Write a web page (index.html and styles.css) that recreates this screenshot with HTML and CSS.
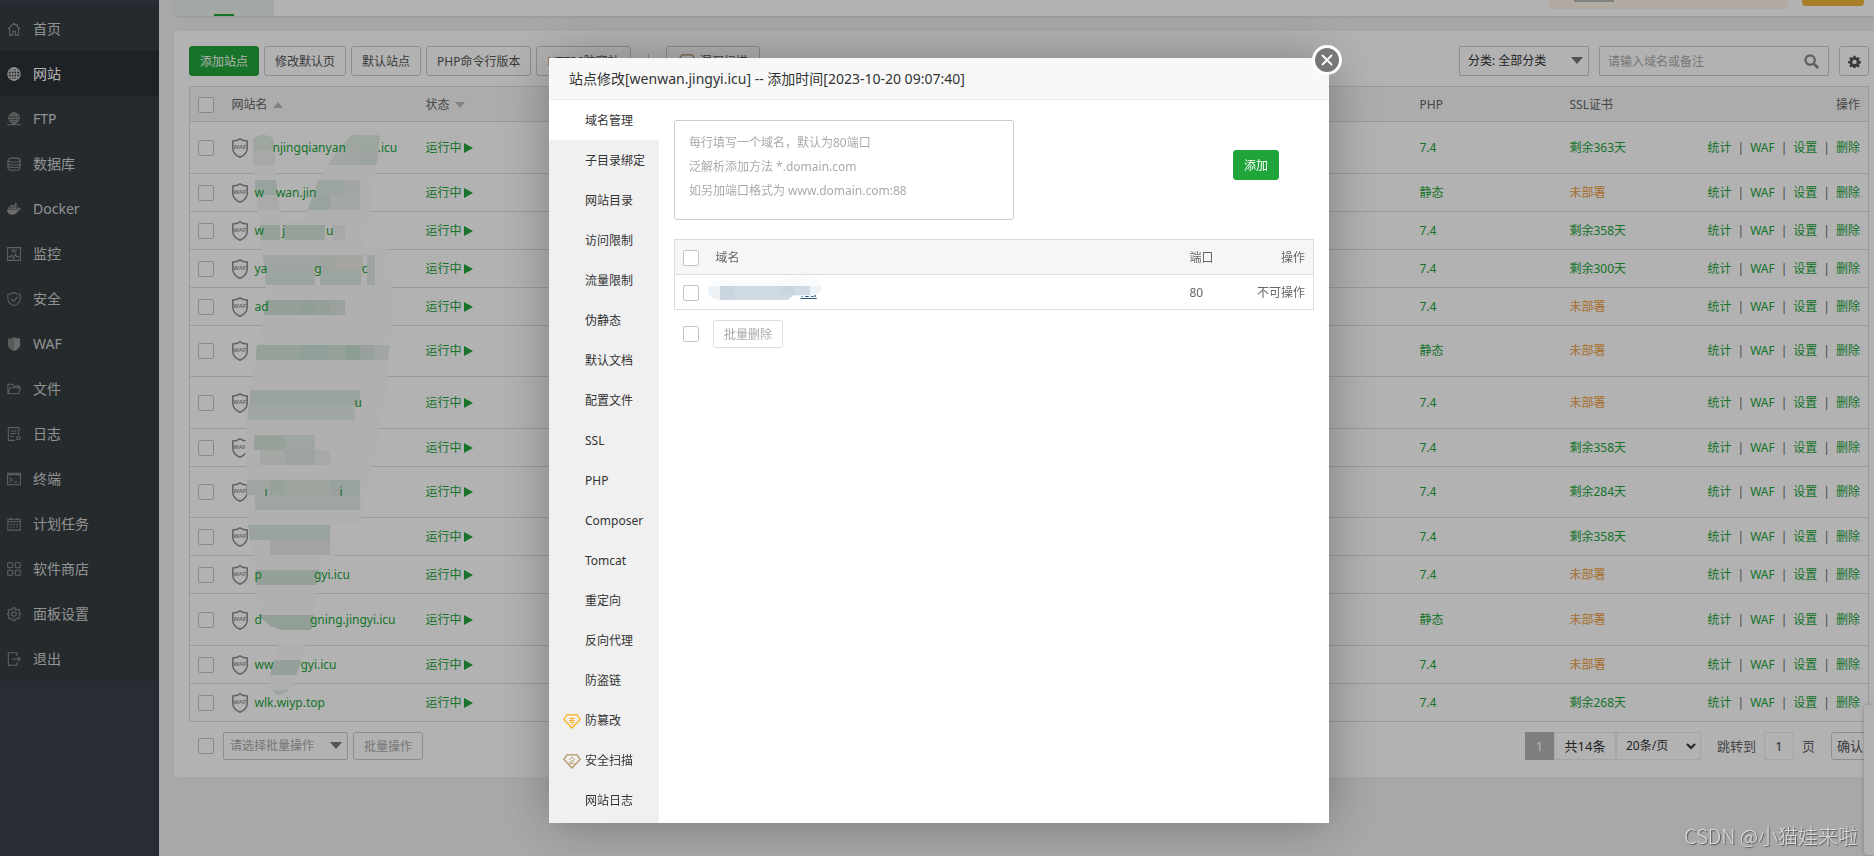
FILE: index.html
```html
<!DOCTYPE html>
<html lang="zh-CN">
<head>
<meta charset="utf-8">
<title>网站</title>
<link rel="stylesheet" href="styles.css">
</head>
<body>
<svg class="defs" aria-hidden="true">
  <symbol id="gem" viewBox="0 0 18 15">
    <path d="M4 .8h10l3.200 4.700L9 14 .8 5.500z" fill="none" stroke="currentColor" stroke-width="1.300"/>
  </symbol>
  <symbol id="caret" viewBox="0 0 12 7"><path d="M0 0h12L6 7z" fill="currentColor"/></symbol>
</svg>

<div class="app">
  <nav class="sidebar">
    <a class="side-item" href="#"><svg viewBox="0 0 16 16"><path d="M1 8l7-6.500L15 8M3 7v8h3.500v-4.500h3V15H13V7M12 2v3"/></svg>首页</a>
    <a class="side-item active" href="#"><svg viewBox="0 0 16 16"><circle cx="8" cy="8" r="7"/><ellipse cx="8" cy="8" rx="3.300" ry="7"/><path d="M8 1v14M1 8h14M2 4.500h12M2 11.500h12"/></svg>网站</a>
    <a class="side-item" href="#"><svg viewBox="0 0 16 16"><circle cx="8" cy="7" r="6"/><ellipse cx="8" cy="7" rx="2.800" ry="6"/><path d="M8 1v13M2 7h12M3 4h10M3 10h10M0 14.500h16M6 14h4"/></svg>FTP</a>
    <a class="side-item" href="#"><svg viewBox="0 0 16 16"><ellipse cx="8" cy="3.500" rx="7" ry="2.500"/><path d="M1 3.500v9C1 14 4 15.200 8 15.200s7-1.200 7-2.700v-9M1 6.500C1 8 4 9.200 8 9.200s7-1.200 7-2.700M1 9.500c0 1.500 3 2.700 7 2.700s7-1.200 7-2.700"/></svg>数据库</a>
    <a class="side-item" href="#"><svg class="solid" viewBox="0 0 16 16"><path d="M0 8.500h11.500c.8-.2.500-2 1-3 1 .6 1.200 1.200 1.300 2 .9-.2 1.600 0 2.200.4-.5.900-1.400 1.200-2.600 1.200C12 12.800 9.500 14.500 6 14.500c-4 0-6-2.300-6-6zM1.500 6h2v2h-2zM4 6h2v2H4zM6.500 6h2v2h-2zM9 6h2v2H9zM4 3.500h2v2H4zM6.500 3.500h2v2h-2zM9 3.500h2v2H9zM9 1h2v2H9z"/></svg>Docker</a>
    <a class="side-item" href="#"><svg viewBox="0 0 16 16"><path d="M.7.700h14.600v14.600H.7zM5 3.500h6M5 5.500h6M2 11h2l1.500-2 2 4 2-5 1.500 3h3"/></svg>监控</a>
    <a class="side-item" href="#"><svg viewBox="0 0 16 16"><path d="M8 .6C6 2 4 2.500 1 2.500V8c0 3.500 3 6 7 7.600 4-1.600 7-4.100 7-7.600V2.500C12 2.500 10 2 8 .6zM4.500 7.500l3 3 4.500-5"/></svg>安全</a>
    <a class="side-item" href="#"><svg class="solid" viewBox="0 0 16 16"><path d="M8 0v16c-4-1.500-7-4-7-7.500V2h1v-.8h1.500V2H5V.8h1.500V1z" opacity=".75"/><path d="M8 0v16c4-1.500 7-4 7-7.500V2h-1v-.8h-1.500V2H11V.8H9.500V1z"/></svg>WAF</a>
    <a class="side-item" href="#"><svg viewBox="0 0 16 16"><path d="M1 13.500v-11h5l1.500 2H14v2M1 13.500L3.500 6.500h12L13 13.500z"/></svg>文件</a>
    <a class="side-item" href="#"><svg viewBox="0 0 16 16"><path d="M9 15.300H1.500V.7h12v8.500M4 4.500h7M4 7.500h7M4 10.500h4"/><circle cx="13" cy="12.500" r="2"/></svg>日志</a>
    <a class="side-item" href="#"><svg viewBox="0 0 16 16"><path d="M.7 1.500h14.600v13H.7zM.7 3h14.600M3 6.500l3 2.500-3 2.500M8 11.500h4"/></svg>终端</a>
    <a class="side-item" href="#"><svg viewBox="0 0 16 16"><path d="M1 2.500h14v12.500H1zM1 5.500h14M4.500.8v3M11.500.8v3M3.500 8.500h2M7 8.500h2M10.500 8.500h2M3.500 11.500h2M7 11.500h2M10.500 11.500h2"/></svg>计划任务</a>
    <a class="side-item" href="#"><svg viewBox="0 0 16 16"><rect x=".8" y=".8" width="5.700" height="5.700" rx="1"/><rect x="9.500" y=".8" width="5.700" height="5.700" rx="1"/><rect x=".8" y="9.500" width="5.700" height="5.700" rx="1"/><rect x="9.500" y="9.500" width="5.700" height="5.700" rx="1"/></svg>软件商店</a>
    <a class="side-item" href="#"><svg viewBox="0 0 16 16"><circle cx="8" cy="8" r="2.600"/><path d="M6.800 1h2.400l.6 1.900 1.200.5 1.800-.9 1.700 1.700-.9 1.800.5 1.200 1.900.6v.4l-1.900 1-.5 1.200.9 1.800-1.700 1.700-1.800-.9-1.200.5-.6 1.900H6.800l-.6-1.900-1.200-.5-1.800.9-1.700-1.700.9-1.800-.5-1.200L0 8.600v-.9l1.900-.5.5-1.200-.9-1.800 1.700-1.700 1.800.9 1.200-.5z"/></svg>面板设置</a>
    <a class="side-item" href="#"><svg viewBox="0 0 16 16"><path d="M11.500 4.500V.8H1.500v14.400h10v-3.700M6 8h9M12.500 5.500L15 8l-2.500 2.500"/></svg>退出</a>
  </nav>

  <main class="main">
    <header class="topbar">
      <div class="tab-current"></div>
      <div class="top-right">
        <div class="notice"></div>
        <button class="pro-btn" aria-label="升级"></button>
      </div>
    </header>

    <section class="panel">
      <div class="toolbar">
        <button class="btn primary">添加站点</button>
        <button class="btn">修改默认页</button>
        <button class="btn">默认站点</button>
        <button class="btn">PHP命令行版本</button>
        <button class="btn">HTTPS防窜站</button>
        <span class="divider"></span>
        <button class="btn scan"><svg class="gem"><use href="#gem"/></svg>漏洞扫描</button>
        <div class="filters">
          <div class="select-box category">
            <select aria-label="分类"><option>分类: 全部分类</option></select>
            <svg class="caret"><use href="#caret"/></svg>
          </div>
          <div class="search">
            <input type="text" placeholder="请输入域名或备注" aria-label="搜索">
            <svg viewBox="0 0 16 16"><circle cx="6.500" cy="6.500" r="5" fill="none" stroke="currentColor" stroke-width="2.400"/><path d="M10 10l5 5" stroke="currentColor" stroke-width="3"/></svg>
          </div>
          <button class="btn gear" aria-label="设置"><svg viewBox="0 0 16 16"><path fill-rule="evenodd" d="M6.700 1h2.600l.4 2 1.200.5 1.700-1.100 1.900 1.900-1.200 1.700.5 1.100 2.100.5v2.700l-2.100.4-.5 1.200 1.200 1.700-1.900 1.900-1.700-1.200-1.200.5-.4 2H6.700l-.4-2-1.200-.5-1.700 1.200-1.900-1.900 1.200-1.700-.5-1.200-2-.4V7.600l2-.5.5-1.100-1.200-1.700 1.900-1.900 1.700 1.100L6.300 3zM8 5.800a2.700 2.700 0 1 0 0 5.400 2.700 2.700 0 0 0 0-5.400z" fill="currentColor"/></svg></button>
        </div>
      </div>

      <div class="table-wrap">
        <table class="sites">
          <thead>
            <tr>
              <th class="c-check"><input type="checkbox" aria-label="全选"></th>
              <th class="c-name">网站名<svg class="sort up"><use href="#caret"/></svg></th>
              <th class="c-status">状态<svg class="sort"><use href="#caret"/></svg></th>
              <th></th>
              <th class="c-php">PHP</th>
              <th class="c-ssl">SSL证书</th>
              <th class="c-ops">操作</th>
            </tr>
          </thead>
          <tbody id="rows"></tbody>
        </table>
        <svg class="mosaic" viewBox="240 120 160 580" aria-hidden="true">
          <defs><clipPath id="brush"><path d="M253 140Q256 135 263 135Q272 135 274 141L276 180 280 212 286 222Q294 217 303 221L307 212 317 183 327 165 345 142Q357 127 367 127Q379 127 380 136L378 157 375 170 370 212 367 225 364 248 374 248Q380 243 389 250L391 287 391 329 390 345 388 360 387 387 380 420 379 433 372 467 369 480 360 523 330 525 330 540 338 555 320 557 319 570 316 593 314 620 311 630 281 630 270 626 258 615 257 593 255 567 250 540 247 513 247 490 245 447 247 420 250 390 253 376 256 350 261 330 265 310 266 290 265 270 262 253 258 212 254 173zM278 645L306 645 300 665 293 683Q288 695 278 695 269 690 269 680 270 660z"/></clipPath></defs>
          <g clip-path="url(#brush)" id="tiles"><rect x="240" y="120" width="160" height="580" fill="#fcfcfc"/></g>
        </svg>
      </div>

      <div class="panel-foot">
        <input type="checkbox" aria-label="全选">
        <div class="select-box batch">
          <select aria-label="批量操作"><option>请选择批量操作</option></select>
          <svg class="caret"><use href="#caret"/></svg>
        </div>
        <button class="btn small muted">批量操作</button>
        <div class="pager">
          <span class="page current">1</span>
          <span class="page total">共14条</span>
          <div class="select-box size">
            <select aria-label="每页条数"><option>20条/页</option></select>
            <svg class="chevron" viewBox="0 0 10 7"><path d="M1 1l4 4 4-4" fill="none" stroke="#333" stroke-width="2"/></svg>
          </div>
          <label class="jump" for="jump">跳转到</label>
          <input class="jump-input" id="jump" type="text" value="1">
          <span class="jump-unit">页</span>
          <button class="btn small confirm">确认</button>
        </div>
      </div>
    </section>
  </main>
</div>
<div class="float-dock"></div>

<div class="overlay">
  <div class="modal" role="dialog" aria-labelledby="title">
    <h2 class="modal-title" id="title">站点修改[wenwan.jingyi.icu] -- 添加时间[2023-10-20 09:07:40]</h2>
    <button class="close" aria-label="关闭"><svg viewBox="0 0 12 12"><path d="M1.500 1.500l9 9M10.500 1.500l-9 9" stroke="#fff" stroke-width="1.800" stroke-linecap="round"/></svg></button>
    <div class="modal-body">
      <nav class="modal-nav">
        <a class="active" href="#">域名管理</a>
        <a href="#">子目录绑定</a>
        <a href="#">网站目录</a>
        <a href="#">访问限制</a>
        <a href="#">流量限制</a>
        <a href="#">伪静态</a>
        <a href="#">默认文档</a>
        <a href="#">配置文件</a>
        <a href="#">SSL</a>
        <a href="#">PHP</a>
        <a href="#">Composer</a>
        <a href="#">Tomcat</a>
        <a href="#">重定向</a>
        <a href="#">反向代理</a>
        <a href="#">防盗链</a>
        <a class="with-gem pro" href="#"><svg class="gem" viewBox="0 0 18 15"><use href="#gem"/><path d="M6 4.500h6M6 6.500h6M9 3v4L7 8.500h4L9 11" fill="none" stroke="currentColor" stroke-width=".9"/></svg>防篡改</a>
        <a class="with-gem ent" href="#"><svg class="gem" viewBox="0 0 18 15"><use href="#gem"/><path d="M6 6l3-3 3 3M9 5.500v4M9 7h2M7 7v2.500M6 9.700h6" fill="none" stroke="currentColor" stroke-width=".8"/></svg>安全扫描</a>
        <a href="#">网站日志</a>
      </nav>
      <div class="modal-main">
        <div class="add-row">
          <textarea aria-label="域名" placeholder="每行填写一个域名，默认为80端口&#10;泛解析添加方法 *.domain.com&#10;如另加端口格式为 www.domain.com:88"></textarea>
          <button class="btn add">添加</button>
        </div>
        <table class="domains">
          <thead>
            <tr><th class="d-check"><input type="checkbox" aria-label="全选"></th><th>域名</th><th class="d-port">端口</th><th class="d-ops">操作</th></tr>
          </thead>
          <tbody>
            <tr>
              <td class="d-check"><input type="checkbox" aria-label="选择"></td>
              <td class="d-name"><a href="#">icu</a>
                <svg class="smudge" viewBox="0 0 114 26" aria-hidden="true">
                  <path d="M0 17Q2 5 14 5H74Q88 0 100 0 114 3 114 13 111 21 102 21H86L80 24H12Q2 24 0 17z" fill="#f9fafb"/>
                  <path d="M0 17Q0 13 1 11H113Q114 19 102 21H80L74 25H12Q2 24 0 17z" fill="#edf2f6"/>
                  <path d="M12 11H102V20H86L80 25H12z" fill="#d0dae4"/>
                  <path d="M12 11h15v14H12zM72 11h15v9H72z" fill="#c9d6e1"/>
                </svg>
              </td>
              <td>80</td><td class="d-ops">不可操作</td>
            </tr>
          </tbody>
        </table>
        <div class="domain-foot">
          <input type="checkbox" aria-label="全选">
          <button class="btn small muted">批量删除</button>
        </div>
      </div>
    </div>
  </div>
</div>
<div class="watermark">CSDN @小猫娃来啦</div>
<script src="rows.js"></script>
</body>
</html>
```
FILE: styles.css
```css
* { box-sizing: border-box; }
body {
  margin: 0;
  overflow: hidden;
  background: #f1f1f1;
  color: #555;
  font: 12px/18px "Noto Sans", "Noto Sans CJK SC", sans-serif;
}
a { color: inherit; text-decoration: none; }
button, input, select, textarea { font: inherit; margin: 0; }
.defs { position: absolute; width: 0; height: 0; }
.app { display: flex; height: 100vh; }

.sidebar {
  flex: none;
  width: 159px;
  padding-top: 6px;
  background: #3c3f4d;
}
.side-item {
  display: flex;
  align-items: center;
  gap: 12px;
  height: 45px;
  padding-left: 7px;
  background: #363d41;
  color: #d2d2d2;
  font-size: 14px;
}
.side-item svg { width: 14px; height: 14px; fill: none; stroke: #8c8c8c; stroke-width: 1.2; }
.side-item svg.solid { fill: #999; stroke: none; }
.side-item.active { background: #2c3035; color: #fff; }
.side-item.active svg { stroke: #ddd; }

.main { flex: 1; min-width: 0; padding-left: 15px; }
.topbar {
  display: flex;
  justify-content: space-between;
  height: 16px;
  background: #fff;
  border-radius: 0 0 0 4px;
  box-shadow: 0 1px 3px rgba(0, 0, 0, .12);
}
.tab-current {
  display: flex;
  align-items: flex-end;
  justify-content: center;
  width: 100px;
  background: #e9f3ec;
}
.tab-current::after { content: ""; width: 20px; height: 2px; background: #20a53a; }
.top-right { display: flex; gap: 14px; padding-right: 10px; }
.notice { width: 239px; height: 9px; background: #fdf4e8; border-radius: 0 0 4px 4px; }
.notice::after { content: ""; display: block; width: 40px; height: 2px; margin-left: 25px; background: #bbb; }
.pro-btn { width: 62px; height: 6px; padding: 0; border: 0; border-radius: 0 0 4px 4px; background: #f0b638; }

.panel { margin-top: 15px; padding: 15px 5px 17px 15px; background: #fff; border-radius: 4px 0 0 4px; }
.toolbar { display: flex; align-items: center; gap: 5px; margin-bottom: 10px; }
.btn {
  height: 30px;
  padding: 1px 10px 0;
  border: 1px solid #ccc;
  border-radius: 3px;
  background: #fff;
  color: #555;
  white-space: nowrap;
}
.btn.primary, .btn.add { border-color: #20a53a; background: #20a53a; color: #fff; }
.btn.small { height: 28px; }
.btn.muted { color: #aaa; }
.btn.scan { display: flex; align-items: center; gap: 4px; padding: 1px 11px 0; }
.gem { width: 18px; height: 15px; color: #b09060; }
.divider { width: 1px; height: 15px; margin: 0 12px; background: #ccc; }
.filters { display: flex; gap: 10px; margin-left: auto; }
.btn.gear { display: grid; place-items: center; width: 30px; padding: 0; }
.gear svg { width: 13px; height: 13px; }

.select-box { position: relative; }
.select-box select {
  width: 100%;
  height: 100%;
  padding: 0 8px;
  border: 1px solid #ccc;
  border-radius: 2px;
  appearance: none;
  background: #fff;
  color: #333;
}
.caret { position: absolute; right: 6px; top: 50%; width: 12px; height: 7px; margin-top: -4px; color: #777; pointer-events: none; }
.category { width: 130px; height: 30px; }
.batch { width: 125px; height: 28px; margin-right: 5px; }
.batch select { padding: 0 6px; color: #aaa; }
.search { display: flex; align-items: center; width: 230px; height: 30px; padding: 0 9px 0 8px; border: 1px solid #ccc; border-radius: 2px; color: #888; }
.search input { flex: 1; min-width: 0; padding: 1px 0 0; border: 0; outline: 0; background: none; }
.search svg { width: 15px; height: 15px; }
::placeholder { color: #aaa; opacity: 1; }

input[type="checkbox"] {
  display: block;
  flex: none;
  width: 16px;
  height: 16px;
  border: 1px solid #c4c4c4;
  border-radius: 2px;
  appearance: none;
  background: #fff;
}
.table-wrap { position: relative; }
table { width: 100%; border-collapse: collapse; table-layout: fixed; border: 1px solid #ddd; }
th, td { height: 38px; padding: 0 8px; text-align: left; font-weight: 400; border-bottom: 1px solid #ddd; white-space: nowrap; }
th { height: 35px; padding-top: 1px; background: #f6f6f6; color: #666; }
.c-check { width: 34px; }
.c-name { width: 194px; }
.c-status { width: 150px; }
.c-php { width: 150px; }
.c-ssl { width: 130px; }
.c-ops { width: 177px; text-align: right; }
.mid td { height: 51px; }
.tall td { height: 52px; }
.sort { width: 10px; height: 6px; margin-left: 5px; vertical-align: 1px; color: #bbb; }
.sort.up { transform: rotate(180deg); }
.site { display: flex; align-items: center; gap: 7px; color: #20a53a; }
.site svg { width: 16px; height: 20px; }
.waf-text { font: bold 6px "Liberation Sans", sans-serif; fill: #999; }
.site-name { position: relative; z-index: 2; display: flex; }
.run { display: flex; align-items: center; gap: 2px; color: #20a53a; }
.run svg { width: 9px; height: 10px; fill: #20a53a; }
.green { color: #20a53a; }
.orange { color: #f0a040; }
.ops { display: flex; justify-content: flex-end; gap: 6px; color: #666; }
.mosaic { position: absolute; left: 51px; top: 34px; z-index: 1; width: 160px; height: 580px; }

.panel-foot { display: flex; align-items: center; padding: 10px 0 0 9px; }
.batch { margin-left: 9px; }
.pager { display: flex; align-items: center; height: 28px; margin-left: auto; font-size: 13px; color: #666; }
.page { display: grid; place-items: center; height: 28px; }
.page.current { width: 29px; background: #b5b5b5; color: #fff; }
.page.total { width: 62px; border: 1px solid #ececec; color: #333; }
.size { width: 85px; height: 28px; }
.size select { padding: 0 9px; border-color: #ececec; border-radius: 0; font-size: 12px; }
.chevron { position: absolute; right: 5px; top: 11px; width: 10px; height: 7px; pointer-events: none; }
.jump { margin-left: 16px; }
.jump-input { width: 30px; height: 28px; margin: 0 8px; padding: 0; border: 1px solid #ececec; background: none; color: #333; font-size: 12px; text-align: center; }
.confirm { margin-left: 16px; padding: 0 5px; }
.float-dock { position: fixed; right: 0; bottom: 1px; width: 10px; height: 150px; border-radius: 4px 0 0 4px; background: #fff; box-shadow: 0 0 4px rgba(0, 0, 0, .25); }

.overlay { position: fixed; inset: 0; z-index: 5; display: flex; justify-content: center; align-items: flex-start; padding: 58px 0 0 4px; background: rgba(0, 0, 0, .3); }
.modal { position: relative; width: 780px; background: #fff; box-shadow: 1px 1px 50px rgba(0, 0, 0, .3); }
.modal-title { height: 42px; margin: 0; padding: 0 20px; border-bottom: 1px solid #eee; background: #f8f8f8; color: #333; font-size: 14px; font-weight: 400; line-height: 42px; }
.close { position: absolute; right: -13px; top: -13px; display: grid; place-items: center; width: 30px; height: 30px; padding: 0; border: 3px solid #fff; border-radius: 50%; background: #777; }
.close svg { width: 12px; height: 12px; }
.modal-body { display: flex; }
.modal-nav { flex: none; width: 110px; padding-bottom: 3px; background: #f0f0f0; color: #333; }
.modal-nav a { display: flex; align-items: center; height: 40px; padding: 2px 0 0 36px; }
.modal-nav a.active { background: #fff; }
.modal-nav a.with-gem { gap: 4px; padding-left: 14px; }
.modal-nav svg { overflow: visible; }
.with-gem { color: #333; }
.pro .gem { color: #fcae1c; }
.ent .gem { color: #b49766; }
.modal-main { flex: 1; padding: 20px 15px; }
.add-row { display: flex; align-items: center; justify-content: space-between; margin-bottom: 19px; padding-right: 35px; }
.add-row textarea { display: block; width: 340px; height: 100px; padding: 10px 14px; border: 1px solid #ccc; border-radius: 2px; outline: 0; resize: none; line-height: 24px; }
.btn.add { margin-bottom: 10px; }
.domains th, .domains td { height: 35px; padding-top: 1px; }
.domains td { color: #666; }
.d-check { width: 33px; }
.d-port { width: 62px; }
.d-ops { width: 70px; text-align: right; }
.d-name { position: relative; }
.d-name a { padding-left: 85px; color: #23527c; text-decoration: underline; }
.smudge { position: absolute; left: 0; top: 0; width: 114px; height: 26px; }
.domain-foot { display: flex; align-items: center; gap: 14px; padding: 10px 9px; }
.domain-foot .btn { border-color: #ddd; }
.watermark { position: fixed; right: 16px; bottom: 6px; z-index: 6; color: #dcdcdc; font: 20px/28px "Noto Sans CJK SC", sans-serif; font-weight: 300; text-shadow: 1px 1px 1px #555; }
```
FILE: rows.js
```js
// name: visible text pieces; numbers are blank widths in pixels
const sites = [
  { name: [18, 'njingqianyan', 32, '.icu'], php: '7.4', ssl: '剩余363天', size: 'tall' },
  { name: ['w', 12, 'wan.jin'], php: '静态', ssl: '' },
  { name: ['w', 18, 'j', 41, 'u'], php: '7.4', ssl: '剩余358天' },
  { name: ['ya', 47, 'g', 40, 'c'], php: '7.4', ssl: '剩余300天' },
  { name: ['ad'], php: '7.4', ssl: '' },
  { name: [], php: '静态', ssl: '', size: 'mid' },
  { name: [100, 'u'], php: '7.4', ssl: '', size: 'tall' },
  { name: [], php: '7.4', ssl: '剩余358天' },
  { name: [10, 'ı', 72, 'i'], php: '7.4', ssl: '剩余284天', size: 'mid' },
  { name: [], php: '7.4', ssl: '剩余358天' },
  { name: ['p', 52, 'gyi.icu'], php: '7.4', ssl: '' },
  { name: ['d', 48, 'gning.jingyi.icu'], php: '静态', ssl: '', size: 'tall' },
  { name: ['ww', 27, 'gyi.icu'], php: '7.4', ssl: '' },
  { name: ['wlk.wiyp.top'], php: '7.4', ssl: '剩余268天' }
];

const shield = `<svg viewBox="0 0 16 20"><path d="M8 .8C5.8 2.4 3.4 3 .8 3v7.200c0 4 3 7.200 7.200 9 4.200-1.800 7.200-5 7.200-9V3C12.600 3 10.200 2.400 8 .8z" fill="none" stroke="#8c8c8c" stroke-width="1.500"/><text x="8" y="11" text-anchor="middle" class="waf-text">WAF</text></svg>`;

const piece = p => typeof p === 'number' ? `<i style="width:${p}px"></i>` : `<span>${p}</span>`;

document.getElementById('rows').innerHTML = sites.map(s => `
  <tr class="${s.size || ''}">
    <td><input type="checkbox" aria-label="选择"></td>
    <td><div class="site">${shield}<a class="site-name" href="#">${s.name.map(piece).join('')}</a></div></td>
    <td><a class="run" href="#">运行中<svg viewBox="0 0 9 10"><path d="M0 0l9 5-9 5z"/></svg></a></td>
    <td></td>
    <td><a class="green" href="#">${s.php}</a></td>
    <td><a class="${s.ssl ? 'green' : 'orange'}" href="#">${s.ssl || '未部署'}</a></td>
    <td><div class="ops"><a class="green" href="#">统计</a>|<a class="green" href="#">WAF</a>|<a class="green" href="#">设置</a>|<a class="green" href="#">删除</a></div></td>
  </tr>`).join('');

// x, y, width, height, colour of each tile
const tiles = [
  [250, 135, 25, 15, '#e2eee6'], [250, 150, 25, 15, '#eef3ef'], [340, 135, 40, 15, '#e2eee6'], [325, 150, 35, 15, '#e8efea'], [360, 150, 20, 15, '#e2ece5'],
  [254, 180, 24, 15, '#dceae1'], [256, 195, 24, 15, '#f2f5f3'], [310, 180, 35, 15, '#deebe2'], [345, 180, 15, 15, '#e8f0ec'], [300, 195, 30, 15, '#dceae1'], [330, 195, 30, 15, '#eaf0ee'],
  [260, 225, 20, 15, '#d6e7dc'], [284, 225, 41, 15, '#d6e7dc'], [332, 225, 13, 15, '#eff2f1'],
  [262, 255, 58, 15, '#e3edea'], [320, 255, 15, 15, '#e2ede4'], [335, 255, 28, 15, '#ebece2'], [265, 270, 50, 15, '#dfebe4'], [320, 270, 41, 15, '#e0ebe5'], [367, 255, 8, 30, '#e1ebe8'],
  [263, 300, 67, 15, '#d4e5da'], [300, 300, 15, 15, '#cfe3d7'], [330, 300, 15, 15, '#dfe8e2'],
  [256, 345, 104, 15, '#d6e7dc'], [300, 345, 30, 15, '#d0e5da'], [345, 345, 15, 15, '#c9e1d4'], [360, 345, 15, 15, '#dae7de'], [375, 345, 15, 15, '#e8efeb'],
  [250, 390, 110, 15, '#deeae2'], [285, 390, 15, 15, '#dde8e8'], [247, 405, 108, 15, '#e7efe9'],
  [254, 435, 31, 15, '#dae9de'], [285, 435, 30, 15, '#e2edea'], [260, 450, 25, 15, '#ecefec'], [285, 450, 30, 15, '#e2eae6'], [315, 450, 15, 15, '#f0f3f1'],
  [247, 480, 23, 15, '#e6ede8'], [270, 480, 15, 15, '#d8e8dd'], [285, 480, 45, 15, '#e2ebe2'], [330, 480, 30, 15, '#dbe8e4'], [255, 495, 105, 15, '#e7ece7'],
  [248, 525, 82, 15, '#dce8e0'], [270, 540, 60, 15, '#e8ede8'],
  [256, 570, 63, 15, '#d4e5da'], [258, 615, 56, 15, '#d2e4d8'], [268, 660, 33, 15, '#d6e6dd'], [268, 690, 20, 6, '#e4eee8']
];

document.getElementById('tiles').insertAdjacentHTML('beforeend',
  tiles.map(([x, y, w, h, c]) => `<rect x="${x}" y="${y}" width="${w}" height="${h}" fill="${c}"/>`).join(''));
```
